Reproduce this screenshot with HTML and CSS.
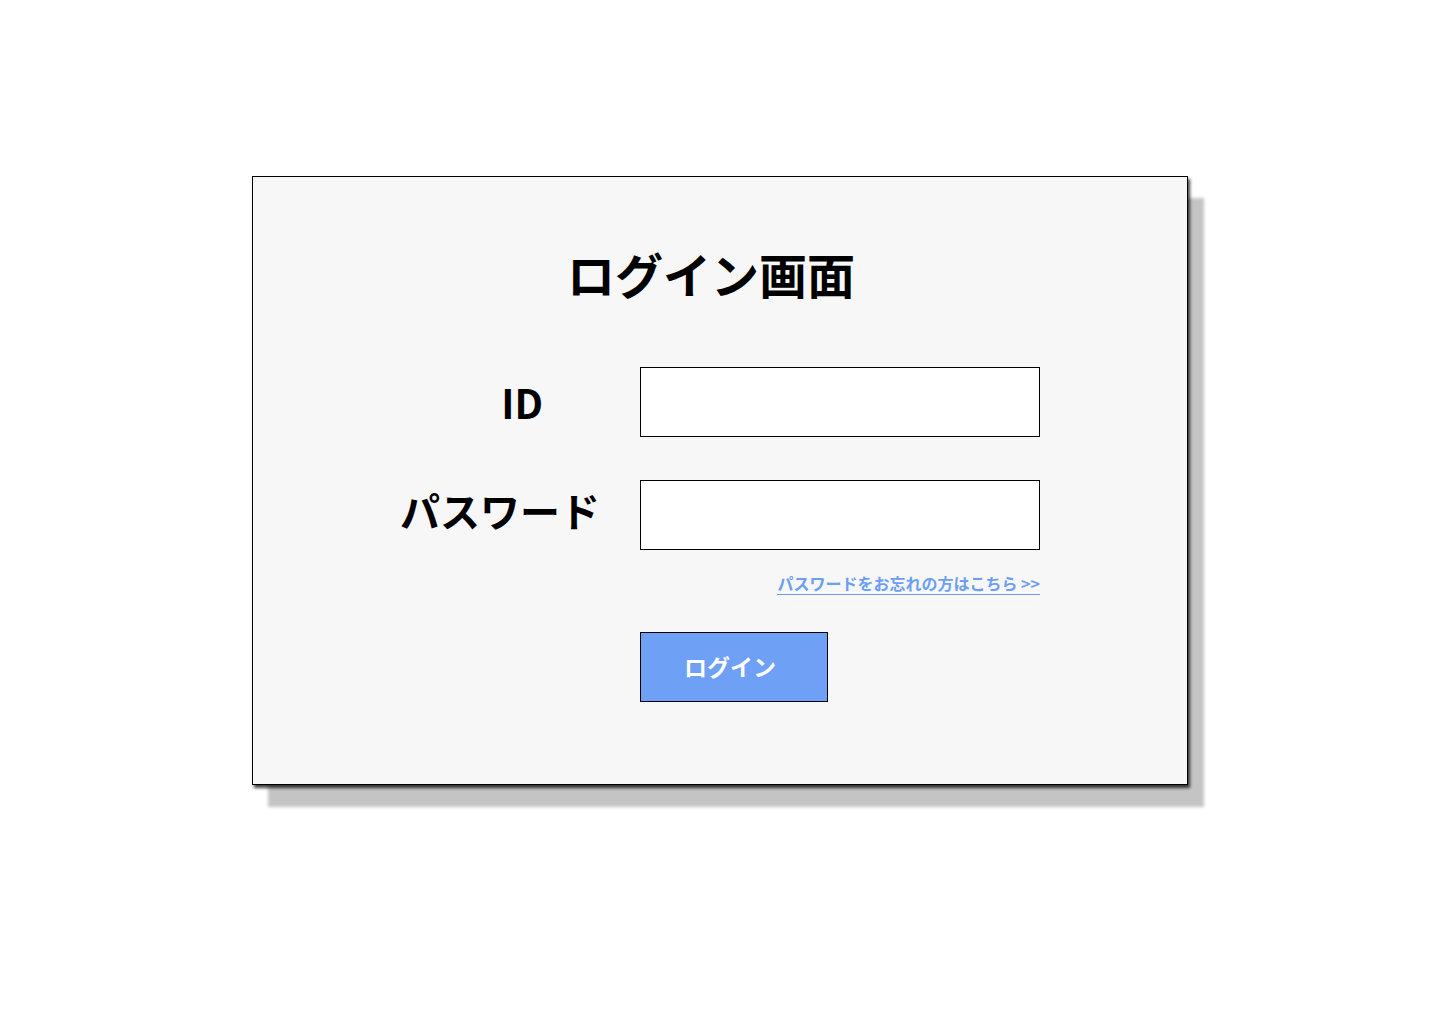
FILE: index.html
```html
<!DOCTYPE html>
<html lang="ja">
<head>
<meta charset="utf-8">
<title>ログイン画面</title>
<link rel="stylesheet" href="styles.css">
</head>
<body>
<main class="page">
  <section class="card">
    <h1 class="title">ログイン画面</h1>
    <form class="form">
      <label class="label label-id" for="id">ID</label>
      <input class="field" id="id" type="text">
      <label class="label label-pw" for="pw">パスワード</label>
      <input class="field field-pw" id="pw" type="password">
      <div class="link-row"><a class="forgot" href="#">パスワードをお忘れの方はこちら &gt;&gt;</a></div>
      <div class="btn-row"><button class="btn" type="button">ログイン</button></div>
    </form>
  </section>
</main>
</body>
</html>
```

FILE: styles.css
```css
html, body {
  margin: 0;
  padding: 0;
  background: #ffffff;
}
body {
  font-family: "Noto Sans CJK JP", "Noto Sans", sans-serif;
  color: #000;
}
.page {
  display: flex;
  justify-content: center;
  align-items: flex-start;
  padding-top: 176px;
  min-height: 1024px;
  box-sizing: border-box;
}
.card {
  box-sizing: border-box;
  width: 936px;
  height: 609px;
  background: #f7f7f7;
  border: 1px solid #000;
  box-shadow: 2px 3px 3px rgba(0, 0, 0, 0.75), 16px 22px 3px rgba(0, 0, 0, 0.23);
  padding-top: 72px;
}
.title {
  margin: 0;
  font-size: 48px;
  line-height: 48px;
  font-weight: 700;
  text-align: center;
  padding-right: 18px;
}
.form {
  width: 640px;
  margin: 70px auto 0;
  display: grid;
  grid-template-columns: 200px 400px;
  column-gap: 40px;
  align-items: center;
}
.label {
  font-size: 40px;
  line-height: 40px;
  font-weight: 700;
  justify-self: end;
  white-space: nowrap;
}
.label-id {
  padding-right: 57px;
}
.label-pw {
  margin-top: 43px;
  padding-bottom: 10px;
}
.field {
  box-sizing: border-box;
  width: 400px;
  height: 70px;
  border: 1px solid #000;
  background: #fff;
  border-radius: 0;
  padding: 0 12px;
  font-size: 20px;
  outline: none;
}
.field-pw {
  margin-top: 43px;
}
.link-row {
  grid-column: 2;
  text-align: right;
  margin-top: 25px;
  line-height: 0;
}
.forgot {
  display: inline-block;
  font-size: 16px;
  line-height: 17px;
  padding-bottom: 2px;
  font-weight: 700;
  color: #6c9ef3;
  text-decoration: none;
  border-bottom: 1px solid #6c9ef3;
}
.btn-row {
  grid-column: 2;
  margin-top: 37px;
}
.btn {
  box-sizing: border-box;
  width: 188px;
  height: 70px;
  background: #6ea0f5;
  border: 1px solid #000;
  border-radius: 0;
  color: #fff;
  font-family: "Noto Sans CJK JP", "Noto Sans", sans-serif;
  font-size: 23px;
  font-weight: 700;
  padding: 0 8px 2px 0;
  cursor: pointer;
}
```
